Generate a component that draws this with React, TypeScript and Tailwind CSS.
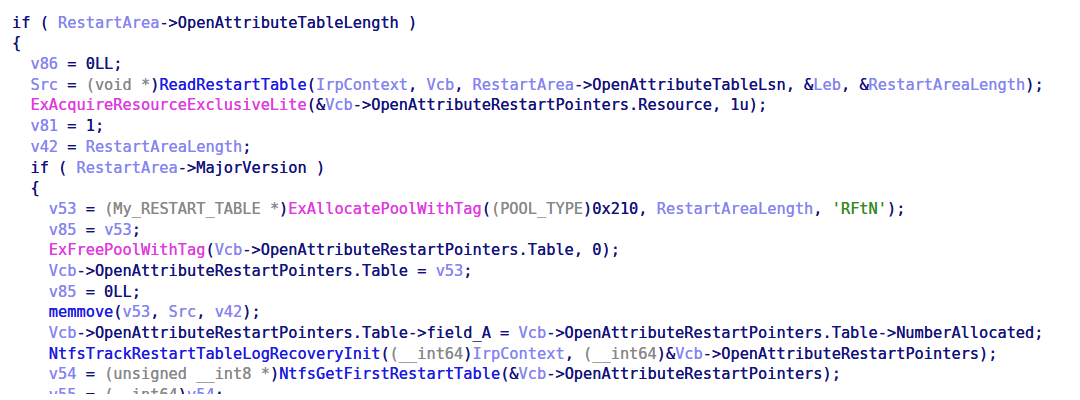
import type { ReactNode } from 'react';

// token colours, IDA pseudocode defaults
const navy = 'text-[#12127a]';
const lvar = 'text-[#8585f0]';
const func = 'text-[#1a1ae2]';
const imp = 'text-[#e03ae0]';
const type = 'text-[#888888]';
const str = 'text-[#3a8a28]';

type Tok = [string, string];

const N = (t: string): Tok => [t, navy];
const V = (t: string): Tok => [t, lvar];
const F = (t: string): Tok => [t, func];
const I = (t: string): Tok => [t, imp];
const T = (t: string): Tok => [t, type];
const S = (t: string): Tok => [t, str];

const lines: { indent: number; toks: Tok[] }[] = [
  { indent: 0, toks: [N('if ( '), V('RestartArea'), N('->OpenAttributeTableLength )')] },
  { indent: 0, toks: [N('{')] },
  { indent: 2, toks: [V('v86'), N(' = 0LL;')] },
  {
    indent: 2,
    toks: [
      V('Src'), N(' = '), T('(void *'), N(')'), F('ReadRestartTable'), N('('), V('IrpContext'), N(', '),
      V('Vcb'), N(', '), V('RestartArea'), N('->OpenAttributeTableLsn, &'), V('Leb'), N(', &'),
      V('RestartAreaLength'), N(');'),
    ],
  },
  {
    indent: 2,
    toks: [I('ExAcquireResourceExclusiveLite'), N('(&'), V('Vcb'), N('->OpenAttributeRestartPointers.Resource, 1u);')],
  },
  { indent: 2, toks: [V('v81'), N(' = 1;')] },
  { indent: 2, toks: [V('v42'), N(' = '), V('RestartAreaLength'), N(';')] },
  { indent: 2, toks: [N('if ( '), V('RestartArea'), N('->MajorVersion )')] },
  { indent: 2, toks: [N('{')] },
  {
    indent: 4,
    toks: [
      V('v53'), N(' = '), T('(My_RESTART_TABLE *'), N(')'), I('ExAllocatePoolWithTag'), N('('), T('(POOL_TYPE'),
      N(')0x210, '), V('RestartAreaLength'), N(', '), S("'RFtN'"), N(');'),
    ],
  },
  { indent: 4, toks: [V('v85'), N(' = '), V('v53'), N(';')] },
  { indent: 4, toks: [I('ExFreePoolWithTag'), N('('), V('Vcb'), N('->OpenAttributeRestartPointers.Table, 0);')] },
  { indent: 4, toks: [V('Vcb'), N('->OpenAttributeRestartPointers.Table = '), V('v53'), N(';')] },
  { indent: 4, toks: [V('v85'), N(' = 0LL;')] },
  { indent: 4, toks: [F('memmove'), N('('), V('v53'), N(', '), V('Src'), N(', '), V('v42'), N(');')] },
  {
    indent: 4,
    toks: [
      V('Vcb'), N('->OpenAttributeRestartPointers.Table->field_A = '), V('Vcb'),
      N('->OpenAttributeRestartPointers.Table->NumberAllocated;'),
    ],
  },
  {
    indent: 4,
    toks: [
      F('NtfsTrackRestartTableLogRecoveryInit'), N('('), T('(__int64'), N(')'), V('IrpContext'), N(', '),
      T('(__int64'), N(')&'), V('Vcb'), N('->OpenAttributeRestartPointers);'),
    ],
  },
  {
    indent: 4,
    toks: [
      V('v54'), N(' = '), T('(unsigned __int8 *'), N(')'), F('NtfsGetFirstRestartTable'), N('(&'), V('Vcb'),
      N('->OpenAttributeRestartPointers);'),
    ],
  },
  { indent: 4, toks: [V('v55'), N(' = '), T('(__int64'), N(')'), V('v54'), N(';')] },
];

function Line({ indent, toks }: { indent: number; toks: Tok[] }): ReactNode {
  return (
    <div className="h-[20.7px] leading-[20.7px] whitespace-pre">
      {' '.repeat(indent)}
      {toks.map(([t, c], i) => (
        <span key={i} className={c}>
          {t}
        </span>
      ))}
    </div>
  );
}

export default function App() {
  return (
    <div className="w-[1080px] h-[400px] bg-white">
      {/* code view, clipped just above the bottom edge like the capture */}
      <div className="h-[394px] overflow-hidden pl-[12px] pt-[12.7px] font-['DejaVu_Sans_Mono',monospace] text-[15.3px] [text-shadow:0_0_0.4px_currentColor]">
        {lines.map((l, i) => (
          <Line key={i} indent={l.indent} toks={l.toks} />
        ))}
      </div>
    </div>
  );
}
